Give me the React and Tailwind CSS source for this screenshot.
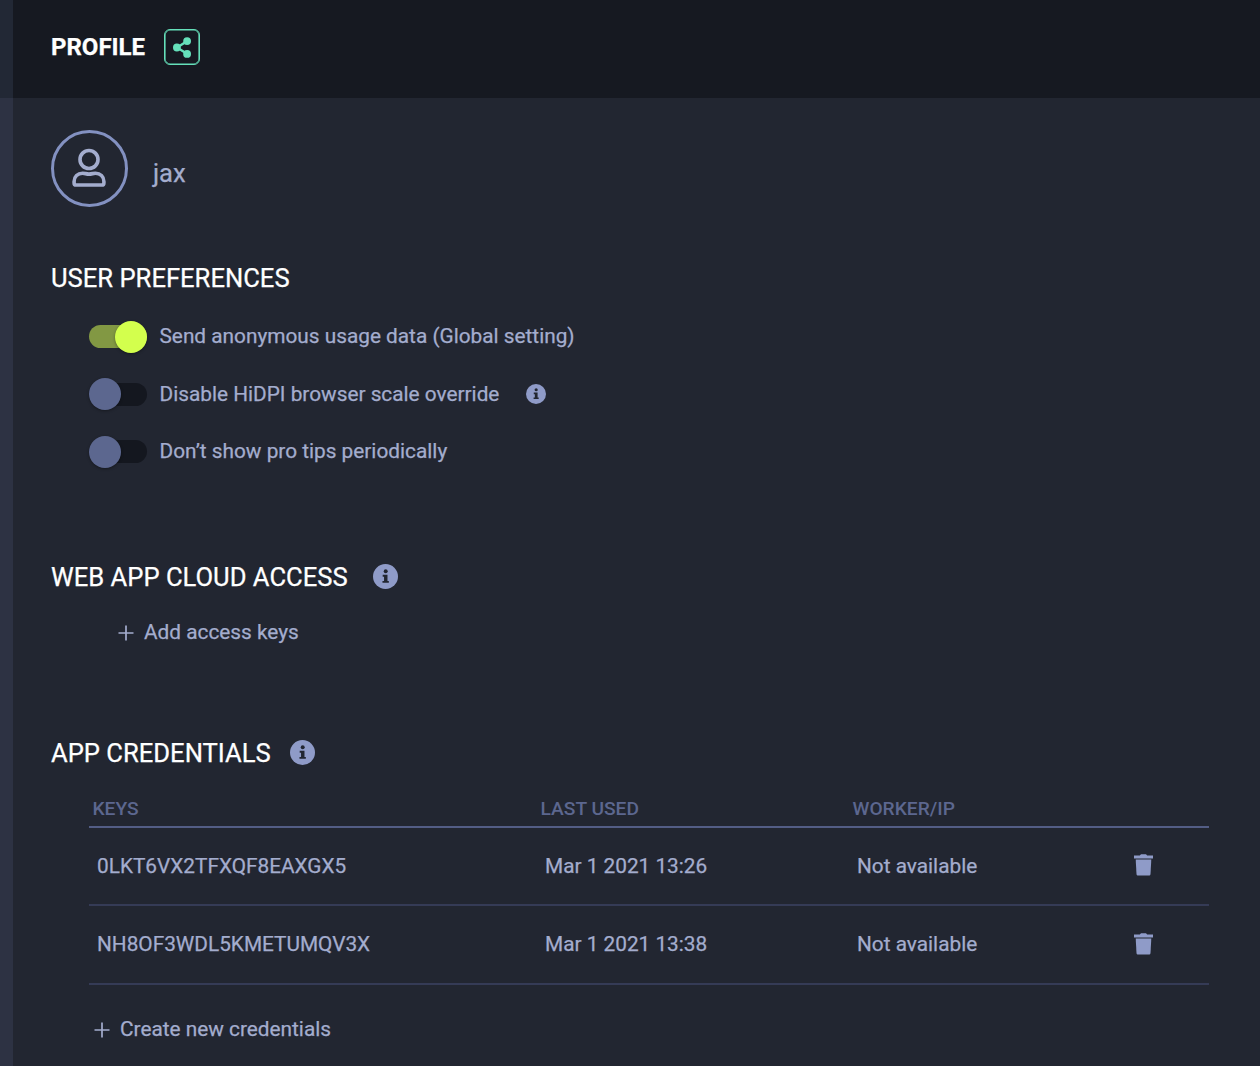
import React from "react";

function InfoIcon({ className }) {
  return (
    <svg viewBox="0 0 24 24" className={className} fill="none">
      <circle cx="12" cy="12" r="12" fill="#8f9bc8" />
      <circle cx="12.2" cy="6.9" r="1.9" fill="#222631" />
      <path d="M9.3 10.3h4.6v5.9h1.3v1.9H9.1v-1.9h1.5v-4H9.3z" fill="#222631" />
    </svg>
  );
}

function ShareIcon() {
  return (
    <svg viewBox="0 0 18 21" className="h-[21px] w-[18px]" fill="#65e0ba">
      <path d="M14 4.2 4 10.5l10 6.3" fill="none" stroke="#65e0ba" strokeWidth="2.4" />
      <circle cx="14.1" cy="4.1" r="3.9" />
      <circle cx="3.9" cy="10.5" r="3.9" />
      <circle cx="14.1" cy="16.9" r="3.9" />
    </svg>
  );
}

function UserIcon() {
  return (
    <svg viewBox="0 0 36 40" className="mr-[1px] mb-[2px] h-10 w-9" fill="none" stroke="#a4adce" strokeWidth="3.6">
      <circle cx="18" cy="11.5" r="9" />
      <path d="M11.5 25.2c2.4 0 3.7.9 6.5.9s4.100-.9 6.500-.9c4.800 0 8.400 3.400 8.400 8.200v1.500c0 1.200-.9 2.100-2.100 2.100H5.200c-1.200 0-2.100-.9-2.100-2.100v-1.500c0-4.800 3.600-8.200 8.400-8.200z" />
    </svg>
  );
}

function TrashIcon() {
  return (
    <svg viewBox="0 0 19 22" className="-mt-[1px] h-[22px] w-[19px]" fill="#8f9bc8">
      <path d="M0 1.600h5.800L7 .3h5l1.200 1.300H19v2.800H0z" />
      <path d="M1.700 5.600h15.600l-.8 14.400c-.1 1-.7 1.500-1.600 1.500H4.100c-.9 0-1.500-.5-1.600-1.500z" />
    </svg>
  );
}

function PlusIcon() {
  return (
    <svg viewBox="0 0 16 16" className="mt-[3px] h-4 w-4" stroke="#a4adce" strokeWidth="1.700">
      <path d="M8 .5v15M.5 8h15" />
    </svg>
  );
}

function Toggle({ on }) {
  return (
    <span
      role="switch"
      aria-checked={on}
      className={`flex h-[23px] w-[58px] items-center rounded-full ${on ? "justify-end bg-[#829843]" : "justify-start bg-[#14171f]"}`}
    >
      <span
        className={`h-8 w-8 shrink-0 rounded-full shadow-[0_1px_3px_rgba(0,0,0,0.35)] ${on ? "bg-[#d3ff4d]" : "bg-[#5c678f]"}`}
      />
    </span>
  );
}

function Preference({ on, label, info }) {
  return (
    <div className="flex h-[57.600px] items-center">
      <Toggle on={on} />
      <span className="mb-[1.500px] ml-[12.500px]">{label}</span>
      {info && <InfoIcon className="mb-[1.500px] ml-[27px] h-5 w-5" />}
    </div>
  );
}

function SectionTitle({ children }) {
  return <h2 className="text-[25.600px] leading-8 text-white">{children}</h2>;
}

const credentials = [
  { key: "0LKT6VX2TFXQF8EAXGX5", used: "Mar 1 2021 13:26", worker: "Not available" },
  { key: "NH8OF3WDL5KMETUMQV3X", used: "Mar 1 2021 13:38", worker: "Not available" },
];

export default function App() {
  return (
    <div className="flex h-[1066px] w-[1260px] overflow-hidden bg-[#222631] font-['Roboto',sans-serif] text-[20.800px] leading-6 text-[#a4adce] [-webkit-text-stroke:0.25px]">
      <aside className="flex w-[13px] shrink-0 flex-col">
        <div className="h-[98px] bg-[#222835]" />
        <div className="flex-1 bg-[#2d3243]" />
      </aside>
      <div className="min-w-0 flex-1">
        <header className="flex h-[98px] items-center bg-[#161921] pb-1 pl-[38px]">
          <h1 className="text-[24px] leading-8 font-bold text-white">PROFILE</h1>
          <button className="ml-[19px] flex h-9 w-9 items-center justify-center rounded-[6px] border border-[#65e0ba] shadow-[inset_0_0_0_0.600px_#65e0ba]">
            <ShareIcon />
          </button>
        </header>
        <main className="pl-[38px]">
          <section className="flex pt-8">
            <div className="flex h-[77px] w-[77px] items-center justify-center rounded-full border-[3px] border-[#8391c1]">
              <UserIcon />
            </div>
            <span className="mt-[27px] ml-[25px] text-[25.600px] leading-8">jax</span>
          </section>

          <section className="mt-[55px]">
            <SectionTitle>USER PREFERENCES</SectionTitle>
            <div className="mt-[14px] pl-[38px]">
              <Preference on label="Send anonymous usage data (Global setting)" />
              <Preference label="Disable HiDPI browser scale override" info />
              <Preference label="Don’t show pro tips periodically" />
            </div>
          </section>

          <section className="mt-[80px]">
            <div className="flex items-center">
              <SectionTitle>WEB APP CLOUD ACCESS</SectionTitle>
              <InfoIcon className="ml-[25.500px] h-[25px] w-[25px]" />
            </div>
            <button className="mt-[27px] ml-[67px] flex items-center gap-[10px]">
              <PlusIcon />
              Add access keys
            </button>
          </section>

          <section className="mt-[93px]">
            <div className="flex items-center">
              <SectionTitle>APP CREDENTIALS</SectionTitle>
              <InfoIcon className="ml-[19px] h-[25px] w-[25px]" />
            </div>
            <div className="mt-[28px] ml-[38px] w-[1120px]">
              <div className="grid h-[31px] grid-cols-[448px_312px_268px_92px] border-b-2 border-[#535d85] pl-[3.500px] text-[19.200px] font-medium text-[#5c678f] [-webkit-text-stroke:0px]">
                <span>KEYS</span>
                <span>LAST USED</span>
                <span>WORKER/IP</span>
              </div>
              {credentials.map((c) => (
                <div
                  key={c.key}
                  className="grid h-[78.400px] grid-cols-[448px_312px_276px_76px] items-center border-b-2 border-[#353b56] pl-2"
                >
                  <span>{c.key}</span>
                  <span>{c.used}</span>
                  <span>{c.worker}</span>
                  <button aria-label="Delete" className="pl-[1px]">
                    <TrashIcon />
                  </button>
                </div>
              ))}
            </div>
            <button className="mt-[32px] ml-[43px] flex items-center gap-[10px]">
              <PlusIcon />
              Create new credentials
            </button>
          </section>
        </main>
      </div>
    </div>
  );
}
